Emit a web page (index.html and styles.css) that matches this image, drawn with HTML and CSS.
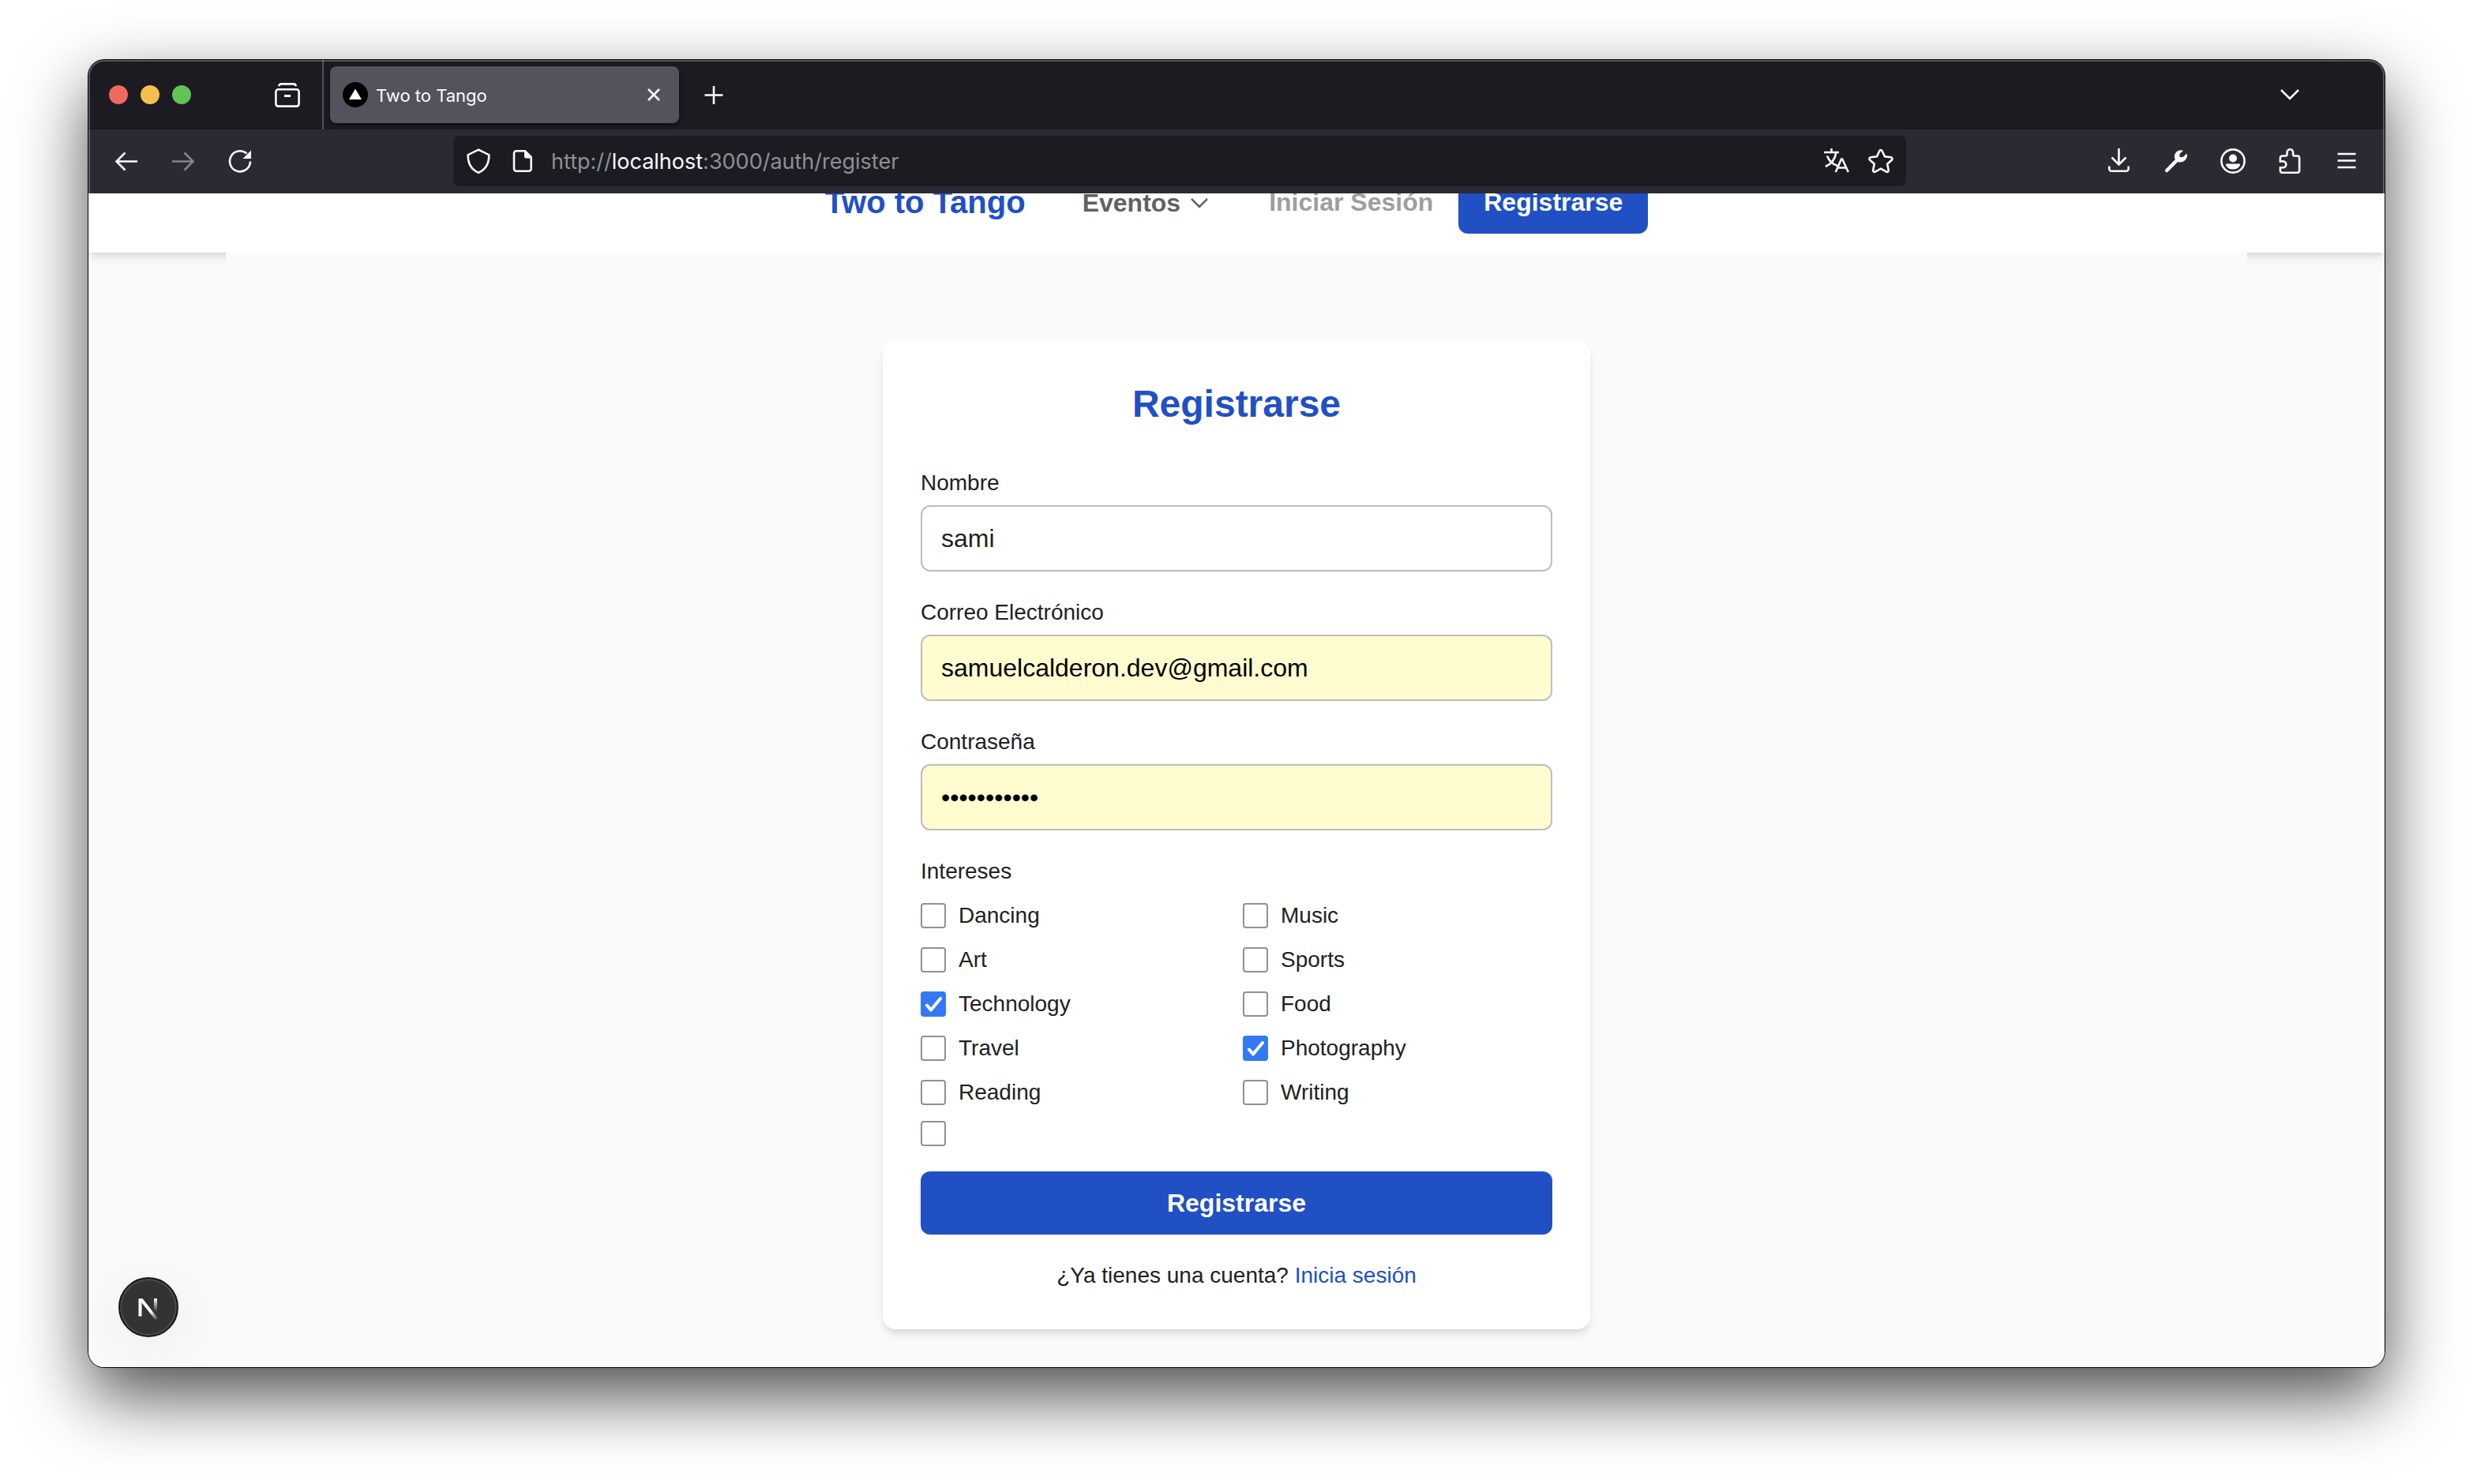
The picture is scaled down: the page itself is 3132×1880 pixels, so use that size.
FILE: index.html
```html
<!DOCTYPE html>
<html lang="es">
<head>
<meta charset="utf-8">
<meta name="viewport" content="width=device-width, initial-scale=1">
<title>Two to Tango</title>
<link rel="stylesheet" href="styles.css">
</head>
<body>
<div class="window">
  <header class="chrome">
    <div class="tabbar">
      <div class="lights">
        <span class="light light-close"></span>
        <span class="light light-min"></span>
        <span class="light light-max"></span>
      </div>
      <button class="view-button" type="button" aria-label="Firefox View">
        <svg class="icon" viewBox="0 0 32 32"><rect x="1.4" y="9.2" width="29.2" height="21.4" rx="3"/><path d="M5.4 5.2c0-1.8 1-2.8 2.8-2.8h15.6c1.800 0 2.800 1 2.800 2.800"/><path class="solid" d="M12 16h8v3h-8z"/></svg>
      </button>
      <div class="tab">
        <svg class="favicon" viewBox="0 0 32 32"><circle cx="16" cy="16" r="16" fill="#000"/><path d="M16 8.500 24 22H8z" fill="#fff"/></svg>
        <span class="tab-title">Two to Tango</span>
        <button class="tab-close" type="button" aria-label="Cerrar pestaña">
          <svg class="icon" viewBox="0 0 32 32"><path d="m9 9 14 14M23 9 9 23"/></svg>
        </button>
      </div>
      <button class="new-tab" type="button" aria-label="Nueva pestaña">
        <svg class="icon" viewBox="0 0 32 32"><path d="M16 5v23M4.500 16.500h23"/></svg>
      </button>
      <button class="all-tabs" type="button" aria-label="Todas las pestañas">
        <svg class="icon" viewBox="0 0 32 32"><path d="m5 10 11 11 11-11"/></svg>
      </button>
    </div>
    <div class="toolbar">
      <button class="tool" type="button" aria-label="Atrás">
        <svg class="icon" viewBox="0 0 32 32"><path d="M30 16.500H4M14.500 5.500l-11 11 11 11"/></svg>
      </button>
      <button class="tool" type="button" aria-label="Adelante" disabled>
        <svg class="icon" viewBox="0 0 32 32"><path d="M2 16.500h26M17.500 5.500l11 11-11 11"/></svg>
      </button>
      <button class="tool" type="button" aria-label="Recargar">
        <svg class="icon" viewBox="0 0 32 32"><path d="M29 16.500a13 13 0 1 1-4.500-10"/><path class="solid" d="M30 2.500V13H19.500z"/></svg>
      </button>
      <div class="spacer"></div>
      <div class="urlbar">
        <svg class="icon" viewBox="0 0 32 32"><path d="M16 1.600 29.300 8.200C29.500 19 25.500 26.500 16 30.700 6.500 26.500 2.500 19 2.700 8.200z"/></svg>
        <svg class="icon" viewBox="0 0 32 32"><path d="M8 3.300h11l7.700 7.700v14.700a3 3 0 0 1-3 3H8a3 3 0 0 1-3-3V6.300a3 3 0 0 1 3-3z"/><path class="solid" d="M18 3l9.500 9.500H20a2 2 0 0 1-2-2z"/></svg>
        <div class="url">http://<span class="host">localhost</span>:3000/auth/register</div>
        <svg class="icon" viewBox="0 0 32 32"><path d="M0 5h19M9.500 0v5M15.500 5C14 14 9 20 2 23M4 9.500C6.500 16 11 20 17 22"/><path d="M14.800 30l7.200-16.500h1.200L30.800 30M18 24.500h10"/></svg>
        <svg class="icon" viewBox="0 0 32 32"><path d="M14.300 3.200c.7-1.500 2.700-1.500 3.400 0l3.300 7.200 7.900.9c1.600.2 2.200 2 1.100 3.200l-5.800 5.300 1.600 7.800c.3 1.600-1.300 2.800-2.700 2L16 25.700l-7.100 3.900c-1.400.8-3-.4-2.700-2l1.600-7.800L2 14.500c-1.100-1.200-.5-3 1.100-3.200l7.900-.9z"/></svg>
      </div>
      <div class="spacer"></div>
      <button class="tool" type="button" aria-label="Descargas">
        <svg class="icon" viewBox="0 0 32 32"><path d="M15.500 0v20.500M6.500 11.500l9 9 9-9M3.300 22.500v3.300a3 3 0 0 0 3 3h18.400a3 3 0 0 0 3-3v-3.300"/></svg>
      </button>
      <button class="tool" type="button" aria-label="Herramientas">
        <svg class="icon" viewBox="0 0 32 32"><path d="M4.200 28 16 16" stroke-width="4.500" stroke-linecap="round"/><path class="solid" d="M25 2.700 20.500 7v4h4L29.600 6.500c.6 2.200.5 4.300-.6 6.300-2.500 4.400-7 5.200-10.500 4.400-4-1.700-5.500-6-4-10C16.500 2.700 21 1.300 25 2.700z"/></svg>
      </button>
      <button class="tool" type="button" aria-label="Cuenta">
        <svg class="icon" viewBox="0 0 32 32"><circle cx="16" cy="16" r="14.600"/><circle class="solid" cx="16" cy="12.500" r="5"/><path class="solid" d="M8 19.500h16c1 0 1.400 1 .9 1.900C23 25 20 26.500 16 26.500S9 25 7.100 21.400c-.5-.9-.1-1.900.9-1.900z"/></svg>
      </button>
      <button class="tool" type="button" aria-label="Extensiones">
        <svg class="icon" viewBox="0 0 32 32"><path d="M6.500 9.500h4.300c1.100 0 1.700-.6 1.700-1.700V5a3.800 3.800 0 0 1 7.600 0v2.800c0 1.100.6 1.700 1.700 1.700h3.700a2.600 2.600 0 0 1 2.600 2.600v16a2.600 2.600 0 0 1-2.600 2.600h-19a2.600 2.600 0 0 1-2.600-2.600v-3.900h3.500a3.900 3.900 0 0 0 0-7.800H3.900v-4.300a2.600 2.600 0 0 1 2.600-2.600z"/></svg>
      </button>
      <button class="tool" type="button" aria-label="Menú">
        <svg class="icon" viewBox="0 0 32 32"><path d="M4.500 7h23M4.500 15.500h23M4.500 24h23"/></svg>
      </button>
    </div>
  </header>

  <div class="viewport">
    <nav class="nav">
      <a class="brand" href="#">Two to Tango</a>
      <button class="events" type="button">Eventos
        <svg class="chevron" viewBox="0 0 24 24"><path d="m2 7 10 10L22 7"/></svg>
      </button>
      <div class="nav-auth">
        <a class="login" href="#">Iniciar Sesión</a>
        <a class="signup" href="#">Registrarse</a>
      </div>
    </nav>
    <main class="main">
      <form class="card">
        <h1 class="title">Registrarse</h1>
        <div class="field">
          <label for="name">Nombre</label>
          <input class="text" id="name" type="text" value="sami">
        </div>
        <div class="field">
          <label for="email">Correo Electrónico</label>
          <input class="text autofilled" id="email" type="email" value="samuelcalderon.dev@gmail.com">
        </div>
        <div class="field">
          <label for="password">Contraseña</label>
          <input class="text autofilled" id="password" type="password" value="tangotango1">
        </div>
        <fieldset class="interests">
          <legend>Intereses</legend>
          <div class="options">
            <label class="option"><input type="checkbox">Dancing</label>
            <label class="option"><input type="checkbox">Music</label>
            <label class="option"><input type="checkbox">Art</label>
            <label class="option"><input type="checkbox">Sports</label>
            <label class="option"><input type="checkbox" checked>Technology</label>
            <label class="option"><input type="checkbox">Food</label>
            <label class="option"><input type="checkbox">Travel</label>
            <label class="option"><input type="checkbox" checked>Photography</label>
            <label class="option"><input type="checkbox">Reading</label>
            <label class="option"><input type="checkbox">Writing</label>
            <label class="option"><input type="checkbox"></label>
          </div>
        </fieldset>
        <button class="submit" type="submit">Registrarse</button>
        <p class="note">¿Ya tienes una cuenta? <a href="#">Inicia sesión</a></p>
      </form>
    </main>
    <button class="devtools" type="button" aria-label="Next.js">
      <svg class="devtools-logo" viewBox="0 0 72 72">
        <defs>
          <linearGradient id="diagonal" gradientUnits="userSpaceOnUse" x1="38" y1="42" x2="47" y2="53"><stop offset="0" stop-color="#fff"/><stop offset="1" stop-color="#fff" stop-opacity="0"/></linearGradient>
          <linearGradient id="stem" gradientUnits="userSpaceOnUse" x1="0" y1="25" x2="0" y2="42"><stop offset="0" stop-color="#fff"/><stop offset="1" stop-color="#fff" stop-opacity="0"/></linearGradient>
        </defs>
        <path d="M23.500 25h4v22.500h-4z" fill="#fff"/>
        <path d="M24 25h4.500l19.500 25-3 2.500L24 26z" fill="url(#diagonal)"/>
        <path d="M43 25h4v17h-4z" fill="url(#stem)"/>
      </svg>
    </button>
  </div>
</div>
</body>
</html>
```
FILE: styles.css
```css
* {
  box-sizing: border-box;
}

body {
  margin: 0;
  padding: 76px 112px 148px;
  background: #fff;
  color: #212121;
  font-family: "Liberation Sans", Arial, sans-serif;
  font-size: 28px;
  line-height: 40px;
}

button {
  padding: 0;
  border: 0;
  background: none;
  color: inherit;
  font: inherit;
}

a {
  color: #2050c4;
  text-decoration: none;
}

.window {
  border-radius: 20px;
  box-shadow: 0 0 0 1px #000, 0 36px 88px rgba(0, 0, 0, 0.7);
}

/* Browser chrome */

.chrome {
  position: relative;
  overflow: hidden;
  border-radius: 20px 20px 0 0;
  background: #2b2a33;
  color: #fbfbfe;
  font-family: Inter, sans-serif;
}

.chrome::after {
  content: "";
  position: absolute;
  inset: 0;
  border: 2px solid rgba(255, 255, 255, 0.25);
  border-bottom: 0;
  border-radius: 20px 20px 0 0;
  pointer-events: none;
}

.icon {
  display: block;
  flex: none;
  width: 32px;
  height: 32px;
  overflow: visible;
  fill: none;
  stroke: currentColor;
  stroke-width: 2.6;
}

.icon .solid {
  fill: currentColor;
  stroke: none;
}

.tabbar {
  display: flex;
  align-items: center;
  height: 88px;
  padding: 0 104px 0 26px;
  background: #1c1b22;
}

.lights {
  display: flex;
  gap: 16px;
  width: 182px;
}

.light {
  width: 24px;
  height: 24px;
  border-radius: 50%;
}

.light-close {
  background: #ed6a5e;
}

.light-min {
  background: #f5bf4f;
}

.light-max {
  background: #61c554;
}

.view-button {
  display: flex;
  align-items: center;
  justify-content: center;
  width: 90px;
  height: 88px;
  border-right: 2px solid #54535b;
}

.tab {
  display: flex;
  align-items: center;
  width: 442px;
  height: 72px;
  margin-left: 8px;
  padding: 0 16px;
  border-radius: 8px;
  background: #54525c;
  box-shadow: 0 2px 6px rgba(0, 0, 0, 0.6);
}

.favicon {
  width: 32px;
  height: 32px;
  margin-right: 10px;
}

.tab-title {
  flex: 1;
  padding-top: 2px;
  font-size: 22px;
}

.new-tab {
  margin-left: 28px;
}

.all-tabs {
  margin-left: auto;
}

.toolbar {
  display: flex;
  align-items: center;
  padding: 8px 12px 9px;
}

.tool {
  display: flex;
  flex: none;
  align-items: center;
  justify-content: center;
  width: 72px;
  height: 64px;
}

.tool:disabled {
  color: #85848b;
}

.spacer {
  flex: 1;
}

.urlbar {
  display: flex;
  align-items: center;
  flex: 0 1 1840px;
  gap: 24px;
  height: 64px;
  padding: 0 16px;
  border-radius: 8px;
  background: #1c1b22;
}

.url {
  flex: 1;
  margin-left: -4px;
  padding-top: 2px;
  color: #8f8f96;
  font-size: 27px;
}

.host {
  color: #fbfbfe;
}

/* Page */

.viewport {
  position: relative;
  overflow: hidden;
  border-radius: 0 0 20px 20px;
  background: #fafafa;
}

/* The page is scrolled a little, so the bar starts above the viewport. */
.nav {
  display: flex;
  align-items: center;
  justify-content: center;
  height: 128px;
  margin-top: -53px;
  background: #fff;
  box-shadow: 0 8px 12px -2px rgba(0, 0, 0, 0.1), 0 4px 8px -4px rgba(0, 0, 0, 0.1);
  font-size: 32px;
  font-weight: 700;
}

.brand {
  margin-right: 72px;
  font-size: 40px;
}

.events {
  display: flex;
  align-items: center;
  gap: 12px;
  margin-right: 76px;
  padding-top: 2px;
  color: #616161;
}

.chevron {
  width: 24px;
  height: 24px;
  fill: none;
  stroke: currentColor;
  stroke-width: 2.5;
}

.nav-auth {
  display: flex;
  align-items: center;
  gap: 32px;
}

.login {
  color: #9e9e9e;
}

.signup {
  padding: 20px 32px;
  border-radius: 12px;
  background: #2050c4;
  color: #fff;
}

.main {
  position: relative;
  max-width: 2560px;
  margin: 0 auto;
  padding: 112px 0 48px;
  background: #fafafa;
}

.card {
  display: flex;
  flex-direction: column;
  gap: 32px;
  max-width: 896px;
  margin: 0 auto;
  padding: 48px;
  border-radius: 16px;
  background: #fff;
  box-shadow: 0 8px 12px -2px rgba(0, 0, 0, 0.1), 0 4px 8px -4px rgba(0, 0, 0, 0.1);
}

.title {
  margin: 0 0 16px;
  color: #2050c4;
  font-size: 48px;
  line-height: 64px;
  text-align: center;
}

.field {
  display: flex;
  flex-direction: column;
  gap: 8px;
}

.text {
  width: 100%;
  height: 84px;
  padding: 0 24px;
  border: 2px solid #bdbdbd;
  border-radius: 12px;
  background: #fff;
  color: #212121;
  font: inherit;
  font-size: 32px;
}

.autofilled {
  background: #fffccf;
  color: #000;
}

.interests {
  min-width: 0;
  margin: 0;
  padding: 0;
  border: 0;
}

.interests legend {
  padding: 0;
}

.options {
  display: grid;
  grid-template-columns: 1fr 1fr;
  gap: 16px;
  padding-top: 16px;
}

.option {
  display: flex;
  align-items: center;
  gap: 16px;
}

.option input {
  appearance: none;
  width: 32px;
  height: 32px;
  margin: 0;
  border: 2px solid #8f8f9d;
  border-radius: 4px;
  background: #fff;
}

.option input:checked {
  border-color: #3478f6;
  background: #3478f6 url("data:image/svg+xml,%3Csvg xmlns='http://www.w3.org/2000/svg' viewBox='0 0 28 28'%3E%3Cpath d='M6 15.500l5 6L23 7' fill='none' stroke='white' stroke-width='4' stroke-linecap='round' stroke-linejoin='round'/%3E%3C/svg%3E") center / 28px 28px no-repeat;
}

.submit {
  height: 80px;
  border-radius: 12px;
  background: #2050c4;
  color: #fff;
  font-size: 32px;
  font-weight: 700;
}

.note {
  margin: 0;
  text-align: center;
}

.devtools {
  position: absolute;
  bottom: 38px;
  left: 38px;
  width: 76px;
  height: 76px;
  border: 2px solid #171717;
  border-radius: 50%;
  background: #333;
  box-shadow: inset 0 0 0 2px #4d4d4d, 0 16px 80px rgba(0, 0, 0, 0.08);
}

.devtools-logo {
  display: block;
  width: 72px;
  height: 72px;
}
```
